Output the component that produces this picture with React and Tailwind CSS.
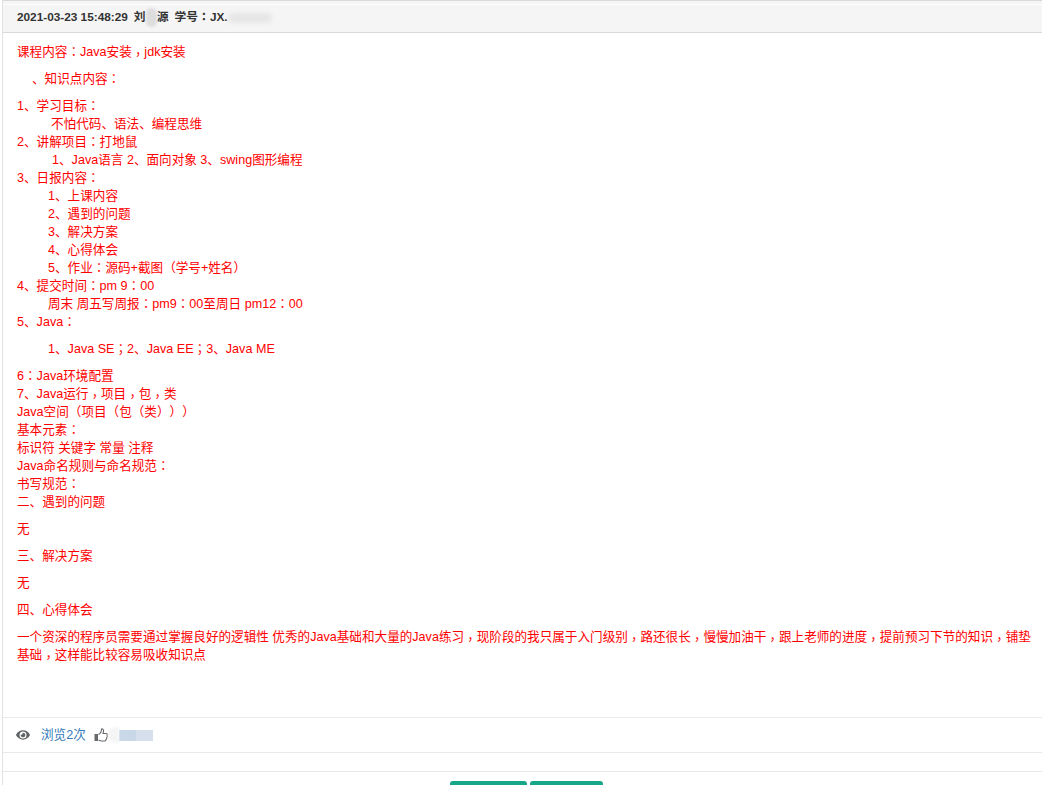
import React from "react";
import { FaEye } from "react-icons/fa";

const font = "font-['Liberation_Sans','Noto_Sans_CJK_SC',sans-serif]";

// Centred full-width punctuation as in the original page's CJK face.
function fmt(node) {
  if (typeof node !== "string") return node;
  return node.split(/([：；（）]+|，)/).map((s, i) => {
    if (!(i % 2)) return s;
    return (
      <span
        key={i}
        className={
          s === "，"
            ? "relative top-[3px] leading-[0] font-['Noto_Sans_CJK_TC',sans-serif]"
            : "leading-[0] font-['Noto_Sans_CJK_TC',sans-serif]"
        }
      >
        {s}
      </span>
    );
  });
}

function P({ children }) {
  return <div className="mb-[9px]">{fmt(children)}</div>;
}

function L({ children, i = 0 }) {
  return <div style={i ? { paddingLeft: i } : undefined}>{fmt(children)}</div>;
}

function Thumb() {
  return (
    <svg width="14" height="14" viewBox="0 0 14 14" className="ml-[10px] text-[#676a6c]">
      <rect x="0.5" y="6" width="3.5" height="7" fill="currentColor" />
      <path
        d="M4.5 6.5 C6.5 5.5 7.5 3.5 7.5 1 C9 0.5 9.8 2 9.5 3.5 L9 5.5 L12.2 5.5 C13.4 5.5 13.6 6.8 13 7.5 C13.5 8.3 13.2 9.2 12.6 9.6 C12.9 10.4 12.5 11.2 11.9 11.5 C12 12.5 11.3 13 10.5 13 L7 13 L4.5 12"
        fill="none"
        stroke="currentColor"
        strokeWidth="1.1"
      />
    </svg>
  );
}

export default function App() {
  return (
    <div className={`w-[1042px] h-[785px] overflow-hidden bg-white [text-spacing-trim:space-all] ${font}`}>
      <div className="ml-[2px] h-full border-l border-[#e2e2e2]">
        <header className="border-t border-b border-[#d9d9d9] bg-[#f5f5f5] h-[33px] pt-[3px] pb-[2px] flex flex-col text-[11.8px] font-bold text-[#333]">
          <div className="flex-1 border-t border-white flex items-center pl-[14px]">
            <span>2021-03-23 15:48:29</span>
            <span className="ml-[6px]">刘</span>
            <span className="w-[11px] h-[19px] rounded-full bg-[#ddd] blur-[1px]"></span>
            <span>源</span>
            <span className="ml-[6px]">{fmt("学号：JX.")}</span>
            <span className="w-[44px] h-[10px] rounded-full bg-[#e6e6e6] blur-[2px]"></span>
          </div>
        </header>
        <main className="h-[685px] border-b border-[#e7eaec] pl-[14px] pr-[9px] pt-[10px] text-[12.6px] leading-[18px] text-[#ff0000]">
          <P>课程内容：Java安装，jdk安装</P>
          <div className="mb-[9px] pl-[15px]">{fmt("、知识点内容：")}</div>
          <div className="mb-[9px]">
            <L>1、学习目标：</L>
            <L i={34}>不怕代码、语法、编程思维</L>
            <L>2、讲解项目：打地鼠</L>
            <L i={35}>1、Java语言 2、面向对象 3、swing图形编程</L>
            <L>3、日报内容：</L>
            <L i={31}>1、上课内容</L>
            <L i={31}>2、遇到的问题</L>
            <L i={31}>3、解决方案</L>
            <L i={31}>4、心得体会</L>
            <L i={31}>5、作业：源码+截图（学号+姓名）</L>
            <L>4、提交时间：pm 9：00</L>
            <L i={31}>周末 周五写周报：pm9：00至周日 pm12：00</L>
            <L>5、Java：</L>
          </div>
          <div className="mb-[9px]"><L i={31}>1、Java SE；2、Java EE；3、Java ME</L></div>
          <div className="mb-[9px]">
            <L>6：Java环境配置</L>
            <L>7、Java运行，项目，包，类</L>
            <L>Java空间（项目（包（类）））</L>
            <L>基本元素：</L>
            <L>标识符 关键字 常量 注释</L>
            <L>Java命名规则与命名规范：</L>
            <L>书写规范：</L>
            <L>二、遇到的问题</L>
          </div>
          <P>无</P>
          <P>三、解决方案</P>
          <P>无</P>
          <P>四、心得体会</P>
          <P>一个资深的程序员需要通过掌握良好的逻辑性 优秀的Java基础和大量的Java练习，现阶段的我只属于入门级别，路还很长，慢慢加油干，跟上老师的进度，提前预习下节的知识，铺垫基础，这样能比较容易吸收知识点</P>
        </main>
        <div className="h-[35px] border-b border-[#e7eaec] flex items-center pl-[13px] text-[12.6px] text-[#337ab7]">
          <FaEye className="text-[#5f6264] text-[14px]" />
          <span className="ml-[11px] w-[43px] whitespace-nowrap">浏览2次</span>
          <Thumb />
          <span className="w-[11px] h-[16px] rounded-l-full bg-[#f5f5f5] blur-[1px]"></span>
          <span className="w-[17px] h-[11px] bg-[#c9d8e8]"></span>
          <span className="w-[17px] h-[11px] bg-[#d5e0ec]"></span>
        </div>
        <div className="h-[19px] border-b border-[#e7eaec]"></div>
        <div className="flex justify-center gap-[3px] pt-[9px] pl-[8px]">
          <div className="w-[77px] h-[20px] rounded-[3px] bg-[#18a689]"></div>
          <div className="w-[73px] h-[20px] rounded-[3px] bg-[#18a689]"></div>
        </div>
      </div>
    </div>
  );
}
